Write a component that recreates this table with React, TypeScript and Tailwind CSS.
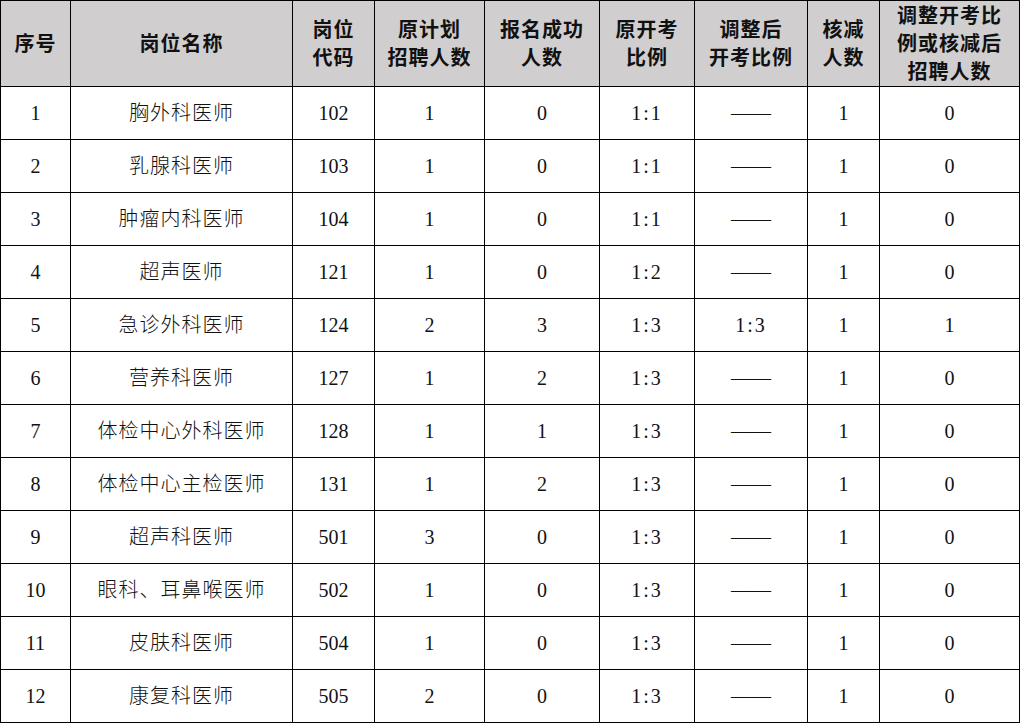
const headers: string[][] = [
  ['序号'],
  ['岗位名称'],
  ['岗位', '代码'],
  ['原计划', '招聘人数'],
  ['报名成功', '人数'],
  ['原开考', '比例'],
  ['调整后', '开考比例'],
  ['核减', '人数'],
  ['调整开考比', '例或核减后', '招聘人数'],
];

const widths = [70, 222, 82, 110, 115, 95, 113, 72, 140];

type Row = [string, string, string, string, string, string, string, string, string];

const rows: Row[] = [
  ['1', '胸外科医师', '102', '1', '0', '1:1', '——', '1', '0'],
  ['2', '乳腺科医师', '103', '1', '0', '1:1', '——', '1', '0'],
  ['3', '肿瘤内科医师', '104', '1', '0', '1:1', '——', '1', '0'],
  ['4', '超声医师', '121', '1', '0', '1:2', '——', '1', '0'],
  ['5', '急诊外科医师', '124', '2', '3', '1:3', '1:3', '1', '1'],
  ['6', '营养科医师', '127', '1', '2', '1:3', '——', '1', '0'],
  ['7', '体检中心外科医师', '128', '1', '1', '1:3', '——', '1', '0'],
  ['8', '体检中心主检医师', '131', '1', '2', '1:3', '——', '1', '0'],
  ['9', '超声科医师', '501', '3', '0', '1:3', '——', '1', '0'],
  ['10', '眼科、耳鼻喉医师', '502', '1', '0', '1:3', '——', '1', '0'],
  ['11', '皮肤科医师', '504', '1', '0', '1:3', '——', '1', '0'],
  ['12', '康复科医师', '505', '2', '0', '1:3', '——', '1', '0'],
];

export default function App() {
  return (
    <div className="bg-white w-[1021px] h-[724px] font-['Liberation_Serif','Noto_Sans_CJK_SC',serif] text-[#111]">
      <table className="table-fixed border-collapse w-[1019px]">
        <colgroup>
          {widths.map((w, i) => (
            <col key={i} style={{ width: w }} />
          ))}
        </colgroup>
        <thead>
          <tr className="h-[86px] bg-[#d0cece]">
            {headers.map((lines, i) => (
              <th
                key={i}
                className="border border-black p-0 text-center align-middle text-[20px] leading-[28px] font-bold tracking-[1px]"
              >
                {lines.map((l, j) => (
                  <div key={j}>{l}</div>
                ))}
              </th>
            ))}
          </tr>
        </thead>
        <tbody>
          {rows.map((r, i) => (
            <tr key={i} className="h-[53px]">
              {r.map((c, j) => (
                <td
                  key={j}
                  className={
                    'border border-black p-0 text-center align-middle text-[20px] leading-none ' +
                    (j === 1
                      ? 'tracking-[1px] font-light'
                      : j === 5 || (j === 6 && c !== '——')
                        ? 'tracking-[2px]'
                        : '')
                  }
                >
                  {c}
                </td>
              ))}
            </tr>
          ))}
        </tbody>
      </table>
    </div>
  );
}
